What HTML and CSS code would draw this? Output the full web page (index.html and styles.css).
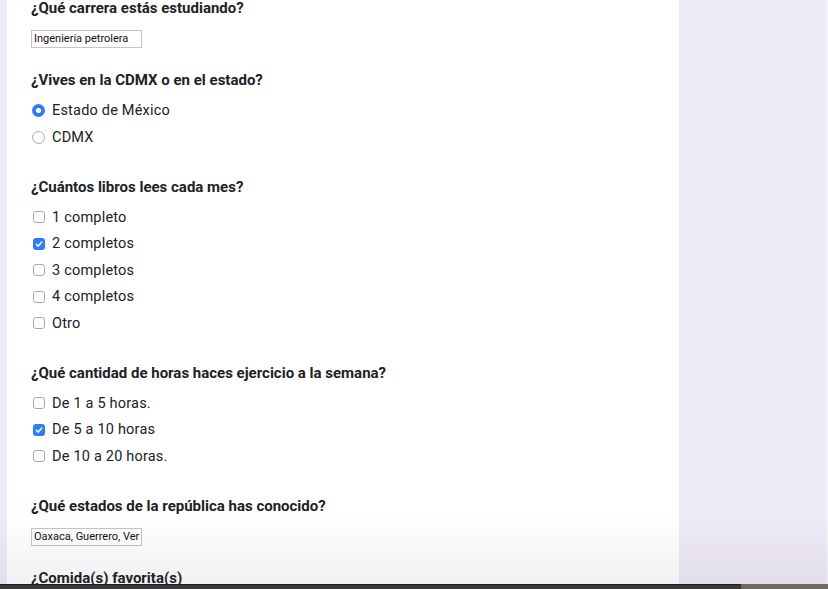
FILE: index.html
```html
<!DOCTYPE html>
<html lang="es">
<head>
<meta charset="utf-8">
<title>Formulario</title>
<link rel="stylesheet" href="styles.css">
</head>
<body>
<div class="page">
  <div class="side-left"></div>
  <main class="card">
    <section class="question">
      <h2 class="q-title">¿Qué carrera estás estudiando?</h2>
      <div class="answer-box">Ingeniería petrolera</div>
    </section>

    <section class="question">
      <h2 class="q-title">¿Vives en la CDMX o en el estado?</h2>
      <ul class="options">
        <li class="option"><span class="radio checked"></span>Estado de México</li>
        <li class="option"><span class="radio"></span>CDMX</li>
      </ul>
    </section>

    <section class="question">
      <h2 class="q-title">¿Cuántos libros lees cada mes?</h2>
      <ul class="options">
        <li class="option"><span class="check"></span>1 completo</li>
        <li class="option"><span class="check checked"><svg viewBox="0 0 12 12" width="12" height="12"><path d="M3.3 6.2 5.2 8.1 8.8 4" fill="none" stroke="#fff" stroke-width="1.5" stroke-linecap="round" stroke-linejoin="round"/></svg></span>2 completos</li>
        <li class="option"><span class="check"></span>3 completos</li>
        <li class="option"><span class="check"></span>4 completos</li>
        <li class="option"><span class="check"></span>Otro</li>
      </ul>
    </section>

    <section class="question">
      <h2 class="q-title">¿Qué cantidad de horas haces ejercicio a la semana?</h2>
      <ul class="options">
        <li class="option"><span class="check"></span>De 1 a 5 horas.</li>
        <li class="option"><span class="check checked"><svg viewBox="0 0 12 12" width="12" height="12"><path d="M3.3 6.2 5.2 8.1 8.8 4" fill="none" stroke="#fff" stroke-width="1.5" stroke-linecap="round" stroke-linejoin="round"/></svg></span>De 5 a 10 horas</li>
        <li class="option"><span class="check"></span>De 10 a 20 horas.</li>
      </ul>
    </section>

    <section class="question">
      <h2 class="q-title">¿Qué estados de la república has conocido?</h2>
      <div class="answer-box">Oaxaca, Guerrero, Ver</div>
    </section>

    <section class="question">
      <h2 class="q-title">¿Comida(s) favorita(s)</h2>
    </section>
  </main>
  <div class="side-right"></div>
  <div class="edge"></div>
</div>
<div class="bottom-shade"></div>
<div class="dock-bar"><div class="dock-dark"></div><div class="dock-light"></div></div>
</body>
</html>
```
FILE: styles.css
```css
html, body {
  margin: 0;
  padding: 0;
  height: 100%;
  overflow: hidden;
}
body {
  background: #f0ebf8;
  font-family: Roboto, "Noto Sans", Arial, sans-serif;
  color: #202124;
}
.page {
  display: flex;
  height: 589px;
}
.side-left {
  width: 7px;
  flex: none;
}
.card {
  width: 672px;
  flex: none;
  background: #fff;
  padding: 0 0 0 24px;
  box-sizing: border-box;
}
.side-right {
  flex: 1;
}
.edge {
  width: 2px;
  background: #f7f5fa;
}
.question {
  margin: 0 0 24px 0;
}
.q-title {
  margin: 0;
  font-size: 15px;
  font-weight: 700;
  line-height: 16px;
  letter-spacing: 0;
  color: #202124;
}
.answer-box {
  margin-top: 14px;
  width: 111px;
  height: 18px;
  box-sizing: border-box;
  border: 1px solid #c6c6c6;
  font-size: 11px;
  line-height: 16px;
  padding: 0 2px;
  white-space: nowrap;
  overflow: hidden;
  color: #111;
}
.options {
  list-style: none;
  margin: 9.5px 0 0 0;
  padding: 0 0 4px 0;
}
.option {
  display: flex;
  align-items: center;
  height: 26.5px;
  font-size: 14.5px;
  letter-spacing: 0.2px;
  color: #202124;
}
.radio {
  width: 13px;
  height: 13px;
  box-sizing: border-box;
  border: 1px solid #a9a9a9;
  border-radius: 50%;
  margin: 0 7px 0 1px;
  flex: none;
  background: #fff;
}
.radio.checked {
  border: none;
  background: radial-gradient(circle, #fff 0 2.2px, #2f7cf6 2.9px);
}
.check {
  width: 12px;
  height: 12px;
  box-sizing: border-box;
  border: 1px solid #a9a9a9;
  border-radius: 3px;
  margin: 0 7px 0 2px;
  flex: none;
  background: #fff;
  display: flex;
}
.check.checked {
  border: none;
  background: #2f7cf6;
}
.bottom-shade {
  position: fixed;
  left: 0;
  right: 0;
  bottom: 5px;
  height: 75px;
  background: linear-gradient(to bottom, rgba(0,0,0,0), rgba(60,50,80,0.07));
  pointer-events: none;
}
.dock-bar {
  position: fixed;
  left: 0;
  right: 0;
  bottom: 0;
  height: 5px;
  display: flex;
}
.dock-dark {
  width: 741px;
  background: #3a3a3b;
  border-top: 1px solid #1f1f20;
  box-sizing: border-box;
}
.dock-light {
  flex: 1;
  background: #6d6a60;
}
```
